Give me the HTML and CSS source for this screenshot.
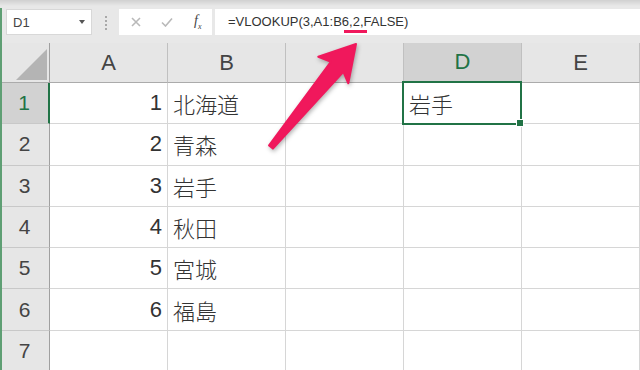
FILE: index.html
```html
<!DOCTYPE html>
<html lang="ja">
<head>
    <meta charset="UTF-8">
    <meta name="viewport" content="width=device-width, initial-scale=1.0">
    <title>VLOOKUP</title>
    <link rel="stylesheet" href="styles.css">
</head>
<body>
    <div class="window">
        <!-- Formula bar -->
        <div class="formula-bar">
            <div class="name-box"><span>D1</span><span class="caret"></span></div>
            <div class="grip"></div>
            <div class="fn-box">
                <svg class="fn-icon" width="10" height="10" viewBox="0 0 10 10"><path d="M1 1 L9 9 M9 1 L1 9" /></svg>
                <svg class="fn-icon" width="12" height="10" viewBox="0 0 12 10"><path d="M1 5.5 L4.5 9 L11 1.5" /></svg>
                <span class="fx"><i>f</i><sub>x</sub></span>
            </div>
            <div class="formula">=VLOOKUP(3,A1:B6,<span class="mark">2</span>,FALSE)</div>
        </div>

        <!-- Sheet -->
        <div class="sheet">
            <div class="cell corner"><span class="tri"></span></div>
            <div class="cell hd">A</div>
            <div class="cell hd">B</div>
            <div class="cell hd">C</div>
            <div class="cell hd on">D</div>
            <div class="cell hd">E</div>

            <div class="cell rh on">1</div>
            <div class="cell num">1</div>
            <div class="cell jp">北海道</div>
            <div class="cell"></div>
            <div class="cell jp active">岩手</div>
            <div class="cell"></div>

            <div class="cell rh">2</div>
            <div class="cell num">2</div>
            <div class="cell jp">青森</div>
            <div class="cell"></div>
            <div class="cell"></div>
            <div class="cell"></div>

            <div class="cell rh">3</div>
            <div class="cell num">3</div>
            <div class="cell jp">岩手</div>
            <div class="cell"></div>
            <div class="cell"></div>
            <div class="cell"></div>

            <div class="cell rh">4</div>
            <div class="cell num">4</div>
            <div class="cell jp">秋田</div>
            <div class="cell"></div>
            <div class="cell"></div>
            <div class="cell"></div>

            <div class="cell rh">5</div>
            <div class="cell num">5</div>
            <div class="cell jp">宮城</div>
            <div class="cell"></div>
            <div class="cell"></div>
            <div class="cell"></div>

            <div class="cell rh">6</div>
            <div class="cell num">6</div>
            <div class="cell jp">福島</div>
            <div class="cell"></div>
            <div class="cell"></div>
            <div class="cell"></div>

            <div class="cell rh">7</div>
            <div class="cell"></div>
            <div class="cell"></div>
            <div class="cell"></div>
            <div class="cell"></div>
            <div class="cell"></div>
        </div>

        <!-- Callout arrow -->
        <svg class="callout" width="640" height="370" viewBox="0 0 640 370">
            <polygon points="269.1,145.4 331,61.7 318.3,56.7 356,44 348.3,83.3 343.4,71.9 272.9,148.6" />
        </svg>
    </div>
</body>
</html>
```

FILE: styles.css
```css
/* Reset */
* {
    margin: 0;
    padding: 0;
    box-sizing: border-box;
}

:root {
    --excel-green: #217346;
    --accent: #f0185c;
    --chrome: #e6e6e6;
    --grid: #d6d6d6;
}

body {
    width: 640px;
    height: 370px;
    overflow: hidden;
    background: #fff;
    font-family: "Liberation Sans", "Noto Sans CJK JP", sans-serif;
    color: #222;
}

.window {
    position: relative;
    height: 370px;
    overflow: hidden;
}

/* green window edge */
.window::before {
    content: "";
    position: absolute;
    top: 8px;
    bottom: 0;
    left: 0;
    width: 2px;
    background: #5f9f74;
    z-index: 2;
}

/* Formula bar */
.formula-bar {
    height: 43px;
    display: flex;
    align-items: flex-start;
    padding: 9px 0 0 6px;
    background: linear-gradient(#d0d0d0, #e8e8e8 6px);
}

.name-box {
    width: 86px;
    height: 26px;
    background: #fff;
    border: 1px solid #d8d8d8;
    display: flex;
    align-items: center;
    justify-content: space-between;
    padding: 0 6px 0 6px;
    font-size: 13px;
    color: #444;
}

.caret {
    border-left: 3.5px solid transparent;
    border-right: 3.5px solid transparent;
    border-top: 4px solid #555;
}

.grip {
    width: 2px;
    height: 14px;
    margin: 7px 12px 0 13px;
    border-left: 2px dotted #a9a9a9;
}

.fn-box {
    width: 93px;
    height: 26px;
    background: #fff;
    display: flex;
    align-items: center;
    padding-left: 12px;
    gap: 20px;
}

.fn-icon path {
    fill: none;
    stroke: #b9b9b9;
    stroke-width: 1.6;
}

.fx {
    font-family: "Liberation Serif", serif;
    font-size: 14px;
    color: #444;
    margin-left: 1px;
}

.fx sub {
    font-size: 8px;
    font-style: italic;
}

.formula {
    flex: 1;
    height: 26px;
    margin-left: 3px;
    background: #fff;
    padding-left: 13px;
    font-size: 13px;
    line-height: 26px;
    color: #333;
    white-space: nowrap;
}

.mark {
    position: relative;
}

.mark::after {
    content: "";
    position: absolute;
    left: -9px;
    right: -7px;
    bottom: -4px;
    height: 3px;
    background: var(--accent);
}

/* Sheet */
.sheet {
    display: grid;
    grid-template-columns: 50px repeat(5, 118px);
    grid-template-rows: 40px repeat(7, 41.3px);
}

.cell {
    display: flex;
    align-items: center;
    padding: 0 5px;
    border-right: 1px solid var(--grid);
    border-bottom: 1px solid var(--grid);
    font-size: 22px;
    white-space: nowrap;
}

.jp {
    font-family: "Noto Sans CJK JP", sans-serif;
    font-weight: 300;
    color: #333;
}

.num {
    justify-content: flex-end;
    color: #333;
}

.hd,
.corner {
    background: var(--chrome);
    border-right-color: #c0c0c0;
    border-bottom-color: #ababab;
    justify-content: center;
    color: #444;
}

.corner {
    justify-content: flex-end;
    align-items: flex-end;
    padding: 0 2px 2px 0;
    border-right-color: #a0a0a0;
}

.tri {
    width: 31px;
    height: 31px;
    background: #b4b4b4;
    clip-path: polygon(100% 0, 100% 100%, 0 100%);
}

.rh {
    background: var(--chrome);
    border-right-color: #a0a0a0;
    border-bottom-color: #c8c8c8;
    justify-content: center;
    font-size: 21px;
    color: #444;
}

.hd.on {
    background: #d2d2d2;
    color: var(--excel-green);
    border-bottom: 2px solid var(--excel-green);
}

.rh.on {
    background: #d2d2d2;
    color: var(--excel-green);
    border-right: 2px solid var(--excel-green);
}

/* Selected cell */
.active {
    position: relative;
}

.active::after {
    content: "";
    position: absolute;
    top: -2px;
    left: -2px;
    right: -1px;
    bottom: -2px;
    border: 2px solid var(--excel-green);
}

.active::before {
    content: "";
    position: absolute;
    right: -3px;
    bottom: -4px;
    width: 6px;
    height: 6px;
    background: var(--excel-green);
    border: 1px solid #fff;
    z-index: 1;
}

/* Arrow overlay */
.callout {
    position: absolute;
    top: 0;
    left: 0;
    pointer-events: none;
    filter: drop-shadow(1px 2px 2px rgba(0, 0, 0, 0.3));
}

.callout polygon {
    fill: var(--accent);
    stroke: var(--accent);
    stroke-width: 2;
    stroke-linejoin: round;
}
```
